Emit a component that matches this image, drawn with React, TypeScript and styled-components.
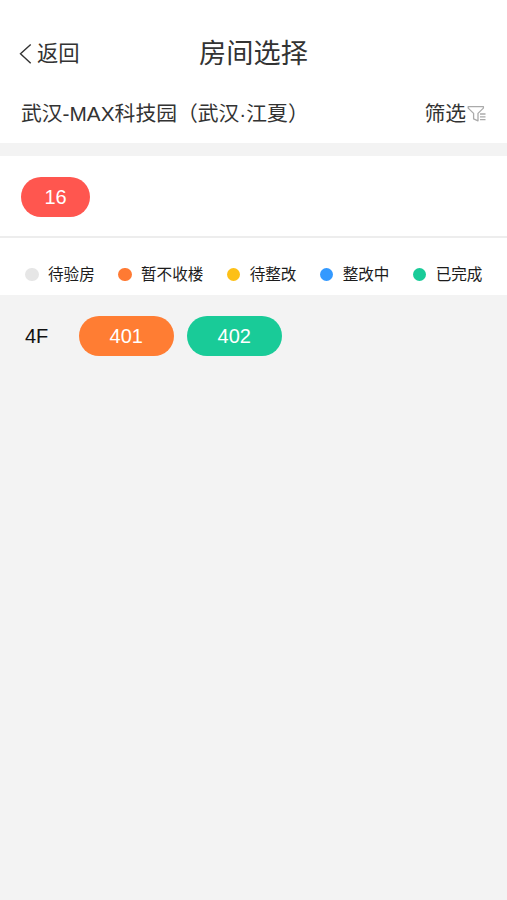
import React from "react";
import styled, { createGlobalStyle } from "styled-components";

const GlobalStyle = createGlobalStyle`
  * { box-sizing: border-box; }
  body {
    margin: 0;
    background: #f3f3f3;
    font-family: "Liberation Sans", "Noto Sans CJK SC", sans-serif;
    color: #333;
  }
`;

const Page = styled.main`
  min-height: 900px;
  background: #f3f3f3;
`;

const Header = styled.header`
  height: 143px;
  padding-top: 31px;
  background: #fff;
`;

const NavBar = styled.div`
  display: grid;
  grid-template-columns: 1fr auto 1fr;
  align-items: center;
  height: 46px;
  padding: 0 19px;
`;

const BackButton = styled.button`
  display: flex;
  align-items: center;
  gap: 4px;
  padding: 0;
  border: 0;
  background: none;
  color: inherit;
  font: inherit;
  font-size: 21.3px;
  line-height: 30px;
`;

const Title = styled.h1`
  margin: 0;
  font-size: 27.2px;
  font-weight: 400;
  line-height: 46px;
`;

const ProjectBar = styled.div`
  display: flex;
  align-items: center;
  justify-content: space-between;
  height: 40px;
  margin-top: 17px;
  padding: 0 21px;
  font-size: 20.8px;
  line-height: 40px;
  white-space: nowrap;
`;

const Filter = styled.div`
  display: flex;
  align-items: center;
  gap: 1px;
`;

const BuildingBar = styled.section`
  height: 82px;
  margin-top: 13px;
  padding: 20.5px 21px 0;
  background: #fff;
  border-bottom: 2px solid #ededed;
`;

const Pill = styled.button<{ $color: string; $width: number }>`
  display: block;
  width: ${(p) => p.$width}px;
  height: 40px;
  padding: 1px 0 0;
  border: 0;
  border-radius: 20px;
  background: ${(p) => p.$color};
  color: #fff;
  font: inherit;
  font-size: 20px;
  line-height: 39px;
  text-align: center;
`;

const Legend = styled.ul`
  display: flex;
  align-items: center;
  justify-content: space-between;
  height: 57px;
  margin: 0;
  padding: 16px 24.5px 0 25px;
  background: #fff;
  list-style: none;
`;

const LegendItem = styled.li`
  display: flex;
  align-items: center;
  gap: 9.5px;
  color: #1c1c1c;
  font-size: 15.6px;
  line-height: 24px;
  white-space: nowrap;
`;

const Dot = styled.span<{ $color: string }>`
  width: 13.5px;
  height: 13.5px;
  border-radius: 50%;
  background: ${(p) => p.$color};
`;

const FloorRow = styled.section`
  display: flex;
  align-items: center;
  padding: 21px 25px;
`;

const FloorName = styled.div`
  width: 54px;
  padding-top: 1px;
  color: #111;
  font-size: 20px;
`;

const Rooms = styled.div`
  display: flex;
  gap: 13.5px;
`;

const statuses = [
  { label: "待验房", color: "#e6e6e6" },
  { label: "暂不收楼", color: "#ff7a33" },
  { label: "待整改", color: "#fdc017" },
  { label: "整改中", color: "#3399ff" },
  { label: "已完成", color: "#19cb98" },
];

const rooms = [
  { name: "401", color: "#ff7d33" },
  { name: "402", color: "#19cb98" },
];

function BackIcon() {
  return (
    <svg width="14" height="22" viewBox="0 0 14 22" fill="none" stroke="#333" strokeWidth="1.4">
      <path d="M11.7 1.4 1.5 10.7l10.2 9.5" />
    </svg>
  );
}

function FilterIcon() {
  return (
    <svg width="19" height="18" viewBox="0 0 19 18" fill="none" stroke="#aaa" strokeWidth="1.3" strokeLinejoin="round">
      <path d="M1.2 1.6h15.2v1.5L11 8.4v7.4l-4.4-1.9V8.4L1.2 3.1zM13 9h5.5M13 11.8h5.5M13 14.6h5.5" />
    </svg>
  );
}

export default function App() {
  return (
    <Page lang="zh-CN">
      <GlobalStyle />
      <Header>
        <NavBar>
          <BackButton>
            <BackIcon />
            返回
          </BackButton>
          <Title>房间选择</Title>
        </NavBar>
        <ProjectBar>
          <span>武汉-MAX科技园（武汉·江夏）</span>
          <Filter>
            筛选
            <FilterIcon />
          </Filter>
        </ProjectBar>
      </Header>
      <BuildingBar>
        <Pill $color="#ff564f" $width={69}>16</Pill>
      </BuildingBar>
      <Legend>
        {statuses.map((s) => (
          <LegendItem key={s.label}>
            <Dot $color={s.color} />
            {s.label}
          </LegendItem>
        ))}
      </Legend>
      <FloorRow>
        <FloorName>4F</FloorName>
        <Rooms>
          {rooms.map((r) => (
            <Pill key={r.name} $color={r.color} $width={94.5}>{r.name}</Pill>
          ))}
        </Rooms>
      </FloorRow>
    </Page>
  );
}
